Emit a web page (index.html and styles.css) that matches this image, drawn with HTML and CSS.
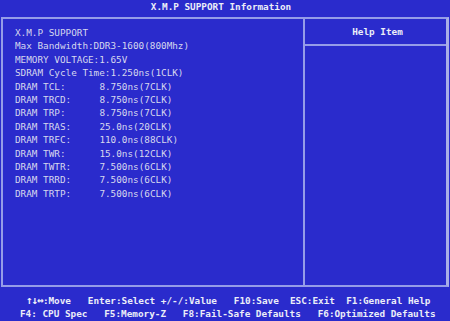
FILE: index.html
```html
<!DOCTYPE html>
<html lang="en">

<head>
    <meta charset="UTF-8">
    <title>X.M.P SUPPORT Information</title>
    <link rel="stylesheet" href="styles.css">
</head>

<body>
    <div class="screen">
        <div class="title">X.M.P SUPPORT Information</div>

        <div class="frame">
            <div class="main">
                <div class="row">X.M.P SUPPORT</div>
                <div class="row">Max Bandwidth:DDR3-1600(800Mhz)</div>
                <div class="row">MEMORY VOLTAGE:1.65V</div>
                <div class="row">SDRAM Cycle Time:1.250ns(1CLK)</div>
                <div class="row"><span class="label">DRAM TCL:</span>8.750ns(7CLK)</div>
                <div class="row"><span class="label">DRAM TRCD:</span>8.750ns(7CLK)</div>
                <div class="row"><span class="label">DRAM TRP:</span>8.750ns(7CLK)</div>
                <div class="row"><span class="label">DRAM TRAS:</span>25.0ns(20CLK)</div>
                <div class="row"><span class="label">DRAM TRFC:</span>110.0ns(88CLK)</div>
                <div class="row"><span class="label">DRAM TWR:</span>15.0ns(12CLK)</div>
                <div class="row"><span class="label">DRAM TWTR:</span>7.500ns(6CLK)</div>
                <div class="row"><span class="label">DRAM TRRD:</span>7.500ns(6CLK)</div>
                <div class="row"><span class="label">DRAM TRTP:</span>7.500ns(6CLK)</div>
            </div>
            <div class="help">
                <div class="help-head">Help Item</div>
            </div>
        </div>

        <div class="keys">
            <div class="keys-row first"><span class="arrows">↑↓↔</span>:Move   Enter:Select +/-/:Value   F10:Save  ESC:Exit  F1:General Help</div>
            <div class="keys-row second">F4: CPU Spec   F5:Memory-Z   F8:Fail-Safe Defaults   F6:Optimized Defaults</div>
        </div>
    </div>
</body>

</html>
```

FILE: styles.css
```css
body {
    margin: 0;
    background-color: #2a2bcc;
    font-family: 'DejaVu Sans Mono', 'Liberation Mono', monospace;
    font-size: 9.34px;
    color: #d6d8ee;
}

.screen {
    width: 450px;
    height: 321px;
    overflow: hidden;
}

.title {
    height: 17px;
    line-height: 14px;
    text-align: center;
    font-weight: bold;
    color: #eceef8;
    padding-right: 8px;
    box-sizing: border-box;
}

.frame {
    box-sizing: border-box;
    height: 270px;
    margin: 0 1px;
    border: 2px solid #959ce8;
    border-right: 3px solid #a9aee6;
    display: grid;
    grid-template-columns: 302px 1fr;
}

.main {
    border-right: 2px solid #959ce8;
    padding: 7px 0 0 12px;
}

.row {
    height: 13.4px;
    line-height: 13.4px;
    white-space: pre;
}

.label {
    display: inline-block;
    width: 84.4px;
}

.help-head {
    height: 25px;
    line-height: 26px;
    border-bottom: 2px solid #959ce8;
    text-align: center;
    font-weight: bold;
    color: #eceef8;
    padding-left: 4px;
}

.keys {
    padding-top: 7px;
    font-weight: bold;
    color: #eceef8;
}

.keys-row {
    height: 13.4px;
    line-height: 13.4px;
    white-space: pre;
}

.keys-row.first {
    padding-left: 26px;
}

.keys-row.second {
    padding-left: 20px;
}

.arrows {
    display: inline-block;
    width: 16.9px;
    font-size: 11px;
    letter-spacing: -1px;
    line-height: 13.4px;
    vertical-align: top;
}
```
